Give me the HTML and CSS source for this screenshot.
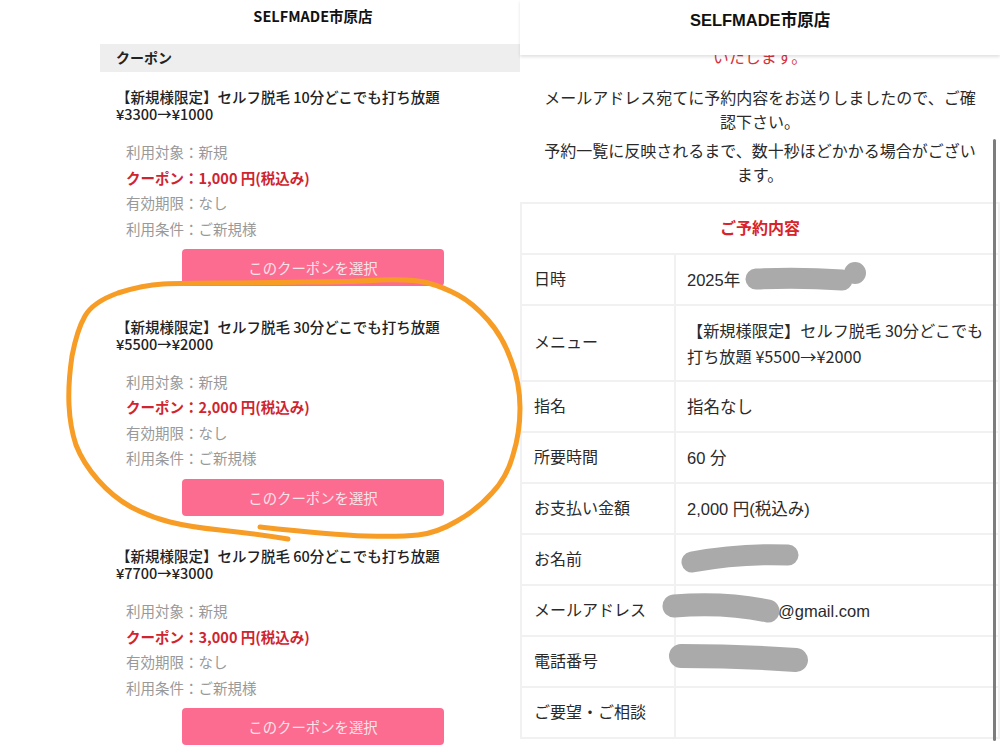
FILE: index.html
```html
<!DOCTYPE html>
<html lang="ja">
<head>
    <meta charset="UTF-8">
    <meta name="viewport" content="width=device-width, initial-scale=1.0">
    <title>SELFMADE市原店</title>
    <link rel="stylesheet" href="styles.css">
</head>
<body>

    <div id="coupon-page">
        <div class="shop-title">SELFMADE市原店</div>
        <div class="section-bar">クーポン</div>

        <div class="coupon">
            <div class="coupon-title">【新規様限定】セルフ脱毛 10分どこでも打ち放題 ¥3300→¥1000</div>
            <ul class="coupon-info">
                <li>利用対象：新規</li>
                <li class="price">クーポン：1,000 円(税込み)</li>
                <li>有効期限：なし</li>
                <li>利用条件：ご新規様</li>
            </ul>
            <button class="select-button">このクーポンを選択</button>
        </div>

        <div class="coupon">
            <div class="coupon-title">【新規様限定】セルフ脱毛 30分どこでも打ち放題 ¥5500→¥2000</div>
            <ul class="coupon-info">
                <li>利用対象：新規</li>
                <li class="price">クーポン：2,000 円(税込み)</li>
                <li>有効期限：なし</li>
                <li>利用条件：ご新規様</li>
            </ul>
            <button class="select-button">このクーポンを選択</button>
        </div>

        <div class="coupon">
            <div class="coupon-title">【新規様限定】セルフ脱毛 60分どこでも打ち放題 ¥7700→¥3000</div>
            <ul class="coupon-info">
                <li>利用対象：新規</li>
                <li class="price">クーポン：3,000 円(税込み)</li>
                <li>有効期限：なし</li>
                <li>利用条件：ご新規様</li>
            </ul>
            <button class="select-button">このクーポンを選択</button>
        </div>
    </div>

    <div id="confirm-page">
        <div class="confirm-header">SELFMADE市原店</div>
        <div class="messages">
            <p class="notice">いたします。</p>
            <p>メールアドレス宛てに予約内容をお送りしましたので、ご確認下さい。</p>
            <p>予約一覧に反映されるまで、数十秒ほどかかる場合がございます。</p>
        </div>

        <table class="booking">
            <colgroup>
                <col class="col-label">
                <col>
            </colgroup>
            <tr><th colspan="2">ご予約内容</th></tr>
            <tr><td>日時</td><td class="value">2025年</td></tr>
            <tr class="row-menu"><td>メニュー</td><td class="value">【新規様限定】セルフ脱毛 30分どこでも打ち放題 ¥5500→¥2000</td></tr>
            <tr><td>指名</td><td class="value">指名なし</td></tr>
            <tr><td>所要時間</td><td class="value">60 分</td></tr>
            <tr><td>お支払い金額</td><td class="value">2,000 円(税込み)</td></tr>
            <tr><td>お名前</td><td class="value"></td></tr>
            <tr><td>メールアドレス</td><td class="value email">@gmail.com</td></tr>
            <tr><td>電話番号</td><td class="value"></td></tr>
            <tr><td>ご要望・ご相談</td><td class="value"></td></tr>
        </table>

        <div class="scrollbar"></div>
    </div>

    <!-- hand drawn marks on top of the screenshots -->
    <svg class="ink" width="1000" height="754" viewBox="0 0 1000 754" fill="none" stroke-linecap="round" stroke-linejoin="round">
        <path stroke="#f79d26" stroke-width="5" d="M260 527 Q333 535 366 536 Q400 537 418 535 Q437 533 457 521 Q477 510 492 493 Q507 477 513 455 Q520 433 520 408 Q520 383 511 360 Q503 337 488 320 Q473 303 458 295 Q443 287 428 283 Q413 279 381 280 Q350 282 306 282 Q263 283 223 283 Q183 283 163 284 Q143 285 118 293 Q93 302 85 316 Q77 330 72 356 Q68 383 69 405 Q70 427 76 445 Q83 463 98 480 Q113 497 131 507 Q150 517 170 522 Q190 527 220 530 Q250 533 288 539"/>
        <g stroke="#aaaaaa">
            <path stroke-width="21" d="M756 279 Q800 277 842 280"/>
            <circle cx="855" cy="273" r="5" stroke-width="12" fill="#aaaaaa"/>
            <path stroke-width="21" d="M692 562 Q740 553 788 555"/>
            <path stroke-width="23" d="M674 606 Q725 602 768 611"/>
            <path stroke-width="24" d="M681 656 Q740 656 796 660"/>
        </g>
    </svg>

</body>
</html>
```

FILE: styles.css
```css
body {
    margin: 0;
    width: 1000px;
    height: 754px;
    display: flex;
    overflow: hidden;
    position: relative;
    background-color: white;
    color: #222;
    font-family: "Noto Sans CJK JP", sans-serif;
}

/* Left screenshot */
#coupon-page {
    width: 420px;
    margin-left: 100px;
}

.shop-title {
    height: 44px;
    padding: 5px 0 0 6px;
    box-sizing: border-box;
    line-height: 21px;
    font-size: 14.5px;
    font-weight: 700;
    text-align: center;
    color: #111;
}

.section-bar {
    height: 28px;
    line-height: 27px;
    padding-left: 16px;
    background-color: #eeeeee;
    font-size: 14px;
    font-weight: 700;
}

.coupon {
    padding: 16px 16px 31.5px;
}

.coupon + .coupon {
    padding-top: 0;
}

.coupon-title {
    font-size: 14.5px;
    font-weight: 500;
    line-height: 17px;
    margin-bottom: 17px;
}

.coupon-info {
    list-style: none;
    margin: 0 0 8px;
    padding: 0 0 0 10px;
    font-size: 14.5px;
    line-height: 25.5px;
    color: #999;
}

.coupon-info .price {
    color: #cf2530;
    font-weight: 700;
}

.select-button {
    display: block;
    width: 262px;
    height: 37px;
    margin-left: 66px;
    border: none;
    border-radius: 4px;
    background-color: #fc6c90;
    color: #fbe3ea;
    font-family: inherit;
    font-size: 14.4px;
}

/* Right screenshot */
#confirm-page {
    width: 480px;
    position: relative;
    font-size: 16px;
    color: #2a2a2a;
    font-family: "Liberation Sans", "Noto Sans CJK JP", sans-serif;
}

.confirm-header {
    position: relative;
    z-index: 2;
    height: 55px;
    line-height: 41px;
    background-color: white;
    box-shadow: 0 2px 3px rgba(0, 0, 0, 0.12);
    font-size: 16.5px;
    font-weight: 700;
    text-align: center;
    color: #111;
}

.messages {
    padding: 0 20px;
    margin-top: -9px;
    margin-bottom: 14px;
    text-align: center;
}

.messages p {
    margin: 0 0 5px;
    line-height: 24px;
}

.messages .notice {
    color: #d6323a;
    margin-bottom: 17px;
}

.booking {
    width: 480px;
    border-collapse: collapse;
    table-layout: fixed;
}

.booking tr {
    height: 51px;
}

.booking .row-menu {
    height: 76px;
}

.col-label {
    width: 154px;
}

.booking th,
.booking td {
    border: 2px solid #f1f1f1;
    padding: 0 12px;
    line-height: 26px;
    text-align: left;
    font-weight: 400;
}

.booking th {
    text-align: center;
    color: #d8232a;
    font-weight: 700;
}

.booking .value {
    padding-left: 11px;
    font-size: 16.5px;
}

.booking .row-menu .value {
    font-family: "Noto Sans CJK JP", sans-serif;
    font-size: 16.2px;
}

.booking .email {
    padding-left: 102px;
}

.scrollbar {
    position: absolute;
    top: 139px;
    right: 4px;
    width: 3px;
    height: 602px;
    border-radius: 2px;
    background-color: #7d7d7d;
}

.ink {
    position: absolute;
    top: 0;
    left: 0;
    pointer-events: none;
}
```
